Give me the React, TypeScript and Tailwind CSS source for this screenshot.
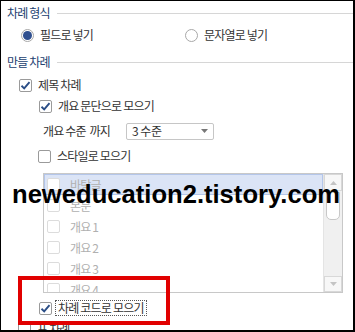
import React from "react";

const KR = { fontFamily: '"Noto Sans CJK KR", "Noto Sans", sans-serif' };

function Check({ checked, disabled }: { checked?: boolean; disabled?: boolean }) {
  return (
    <span
      className={
        "flex h-[13px] w-[13px] shrink-0 items-center justify-center rounded-[2px] border bg-white " +
        (disabled ? "border-[#dcdcdc]" : "border-[#9a9a9a]")
      }
    >
      {checked && (
        <svg width="11" height="11" viewBox="0 0 11 11">
          <path d="M1.5 5.8 L4.2 8.4 L9.5 2.2" fill="none" stroke="#2a4d86" strokeWidth="1.9" />
        </svg>
      )}
    </span>
  );
}

function Radio({ on }: { on?: boolean }) {
  return (
    <span className="flex h-[13px] w-[13px] shrink-0 items-center justify-center rounded-full border border-[#a8a8a8] bg-white">
      {on && <span className="h-[9px] w-[9px] rounded-full bg-[#2f4f8f]" />}
    </span>
  );
}

function Heading({ text }: { text: string }) {
  return (
    <div className="flex items-center pl-[6px]">
      <span className="text-[12px] tracking-[-0.8px] text-[#22406f]">{text}</span>
      <span className="ml-[7px] h-px flex-1 bg-[#d6d6d6]" />
    </div>
  );
}

const items = ["바탕글", "본문", "개요 1", "개요 2", "개요 3", "개요 4"];

export default function App() {
  return (
    <div
      className="relative h-[332px] w-[355px] overflow-hidden border-t border-l border-r-2 border-b-2 border-black bg-white text-[12px] leading-[18px] tracking-[-0.8px] text-[#333]"
      style={KR}
    >
      <div className="flex h-[24px] flex-col justify-center">
        <Heading text="차례 형식" />
      </div>

      <div className="flex h-[20px] items-center">
        <div className="flex w-[184px] items-center gap-[6px] pl-[20px]">
          <Radio on />
          <span>필드로 넣기</span>
        </div>
        <div className="flex items-center gap-[6px]">
          <Radio />
          <span>문자열로 넣기</span>
        </div>
      </div>

      <div className="mt-[7px] flex h-[20px] flex-col justify-center">
        <Heading text="만들 차례" />
      </div>

      <div className="mt-[3px] flex h-[20px] items-center gap-[6px] pl-[18px]">
        <Check checked />
        <span>제목 차례</span>
      </div>

      <div className="mt-px flex h-[20px] items-center gap-[6px] pl-[38px]">
        <Check checked />
        <span>개요 문단으로 모으기</span>
      </div>

      <div className="mt-[5px] flex h-[20px] items-center pl-[42px]">
        <span className="w-[83px] whitespace-pre">개요 수준  까지</span>
        <div className="flex h-[17px] w-[88px] items-center justify-between rounded-[2px] border border-[#c6c6c6] bg-white pl-[5px] pr-[5px]">
          <span className="whitespace-pre tracking-[-0.5px]">3 수준</span>
          <svg width="7" height="4" viewBox="0 0 7 4">
            <path d="M0 0 H7 L3.5 4 Z" fill="#777" />
          </svg>
        </div>
      </div>

      <div className="mt-[5px] flex h-[20px] items-center gap-[6px] pl-[37px]">
        <Check />
        <span>스타일로 모으기</span>
      </div>

      <div className="ml-[42px] mt-[7px] flex h-[120px] w-[300px] overflow-hidden border border-[#c8c8c8] bg-white">
        <div className="flex-1 overflow-hidden">
          {items.map((it, i) => (
            <div
              key={it}
              className={
                "flex h-[21px] items-center gap-[10px] pl-[2px] text-[#b0b0b0] " +
                (i === 0 ? "border border-[#b4c6ea] bg-[#dbe4f6]" : "border border-transparent")
              }
            >
              <Check disabled />
              <span>{it}</span>
            </div>
          ))}
        </div>
        <div className="flex w-[19px] flex-col border-l border-[#e4e4e4] bg-[#f0f0f0]">
          <div className="flex h-[17px] items-center justify-center border border-[#d8d8d8] bg-[#f7f7f7]">
            <svg width="7" height="4" viewBox="0 0 7 4">
              <path d="M0 4 H7 L3.5 0 Z" fill="#c4c4c4" />
            </svg>
          </div>
          <div className="mx-[2px] mt-[1px] h-[28px] rounded-b-[5px] border border-[#c8c8c8] bg-white" />
          <div className="flex-1" />
          <div className="flex h-[16px] items-center justify-center border border-[#d8d8d8] bg-[#f7f7f7]">
            <svg width="7" height="4" viewBox="0 0 7 4">
              <path d="M0 0 H7 L3.5 4 Z" fill="#c4c4c4" />
            </svg>
          </div>
        </div>
      </div>

      <div className="mt-[5px] flex h-[20px] items-center gap-[3px] pl-[38px]">
        <Check checked />
        <span className="border border-dotted border-[#555] px-[2px] leading-[14px]">차례 코드로 모으기</span>
      </div>

      <div className="mt-[5px] flex h-[20px] items-start gap-[6px] pl-[17px]">
        <Check />
        <span className="-mt-[3px]">표 차례</span>
      </div>

      {/* watermark */}
      <div
        className="absolute left-[11px] top-[181px] whitespace-nowrap text-[25.6px] font-bold leading-none tracking-normal text-black"
        style={{ fontFamily: '"Liberation Sans", Arial, sans-serif' }}
      >
        neweducation2.tistory.com
      </div>

      {/* red annotation box */}
      <div className="absolute left-[17px] top-[275px] h-[49px] w-[152px] border-4 border-[#e10000]" />
    </div>
  );
}
